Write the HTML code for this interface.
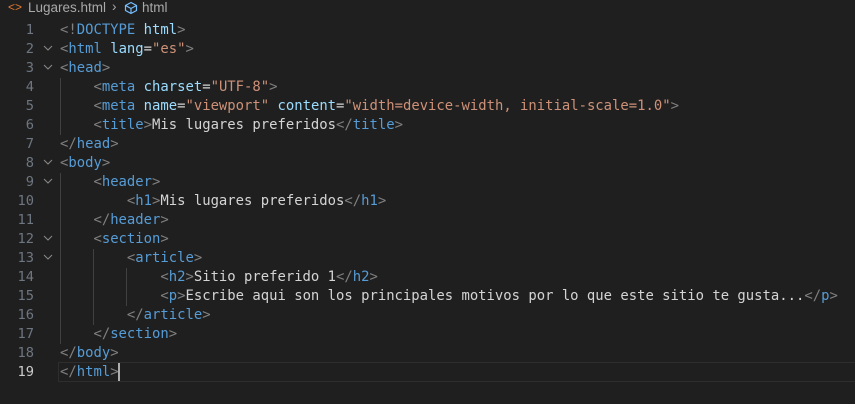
<!DOCTYPE html>
<html><head><meta charset="utf-8"><style>
body{margin:0;width:855px;height:404px;background:#1f1f1f;overflow:hidden;font-family:"DejaVu Sans Mono","Liberation Mono",monospace;position:relative;}
.bc{position:absolute;left:0;top:0;width:300px;height:18px;font:13.5px "Liberation Sans",sans-serif;color:#a9a9a9;}
.ln{position:absolute;left:0;width:34px;text-align:right;font-size:13.7px;line-height:19px;color:#6e7681;}
.code{position:absolute;left:60px;font-size:13.9px;line-height:19px;white-space:pre;color:#d4d4d4;}
.b{color:#808080}.t{color:#569cd6}.a{color:#9cdcfe}.s{color:#ce9178}
.f{position:absolute;left:43px;}
.g{position:absolute;width:1px;background:#404040;}
</style></head><body>
<div class="bc"><span style="position:absolute;left:8px;top:0px;color:#e37933;font-size:12px">&lt;&gt;</span><span style="position:absolute;left:28px;top:0px">Lugares.html</span><span style="position:absolute;left:112px;top:-1px">›</span>
<svg style="position:absolute;left:124px;top:1px" width="14" height="14" viewBox="0 0 14 14" fill="none" stroke="#75beff" stroke-width="1.2"><path d="M7 1.5L12.5 4.5V9.5L7 12.5L1.5 9.5V4.5Z M1.5 4.5L7 7.5L12.5 4.5 M7 7.5V12.5"/></svg>
<span style="position:absolute;left:142px;top:0px">html</span></div>
<div style="position:absolute;left:58px;top:362px;width:797px;height:18px;border:1px solid #2e2e2e;border-right:none"></div>
<div style="position:absolute;left:118px;top:363px;width:2px;height:18px;background:#aeafad"></div>
<div class="g" style="left:60px;top:78px;height:57px"></div>
<div class="g" style="left:60px;top:173px;height:171px"></div>
<div class="g" style="left:93px;top:249px;height:76px"></div>
<div class="g" style="left:126px;top:268px;height:38px"></div>

<div class="ln" style="top:21px">1</div>
<div class="ln" style="top:40px">2</div>
<div class="ln" style="top:59px">3</div>
<div class="ln" style="top:78px">4</div>
<div class="ln" style="top:97px">5</div>
<div class="ln" style="top:116px">6</div>
<div class="ln" style="top:135px">7</div>
<div class="ln" style="top:154px">8</div>
<div class="ln" style="top:173px">9</div>
<div class="ln" style="top:192px">10</div>
<div class="ln" style="top:211px">11</div>
<div class="ln" style="top:230px">12</div>
<div class="ln" style="top:249px">13</div>
<div class="ln" style="top:268px">14</div>
<div class="ln" style="top:287px">15</div>
<div class="ln" style="top:306px">16</div>
<div class="ln" style="top:325px">17</div>
<div class="ln" style="top:344px">18</div>
<div class="ln" style="top:363px;color:#cccccc">19</div>

<svg class="f" style="top:44px" width="10" height="8" viewBox="0 0 10 8"><path d="M1 2L5 6L9 2" fill="none" stroke="#8a8a8a" stroke-width="1"/></svg>
<svg class="f" style="top:63px" width="10" height="8" viewBox="0 0 10 8"><path d="M1 2L5 6L9 2" fill="none" stroke="#8a8a8a" stroke-width="1"/></svg>
<svg class="f" style="top:158px" width="10" height="8" viewBox="0 0 10 8"><path d="M1 2L5 6L9 2" fill="none" stroke="#8a8a8a" stroke-width="1"/></svg>
<svg class="f" style="top:177px" width="10" height="8" viewBox="0 0 10 8"><path d="M1 2L5 6L9 2" fill="none" stroke="#8a8a8a" stroke-width="1"/></svg>
<svg class="f" style="top:234px" width="10" height="8" viewBox="0 0 10 8"><path d="M1 2L5 6L9 2" fill="none" stroke="#8a8a8a" stroke-width="1"/></svg>
<svg class="f" style="top:253px" width="10" height="8" viewBox="0 0 10 8"><path d="M1 2L5 6L9 2" fill="none" stroke="#8a8a8a" stroke-width="1"/></svg>

<div class="code" style="top:21px"><span class="b">&lt;!</span><span class="t">DOCTYPE</span> <span class="a">html</span><span class="b">&gt;</span></div>
<div class="code" style="top:40px"><span class="b">&lt;</span><span class="t">html</span> <span class="a">lang</span>=<span class="s">"es"</span><span class="b">&gt;</span></div>
<div class="code" style="top:59px"><span class="b">&lt;</span><span class="t">head</span><span class="b">&gt;</span></div>
<div class="code" style="top:78px">    <span class="b">&lt;</span><span class="t">meta</span> <span class="a">charset</span>=<span class="s">"UTF-8"</span><span class="b">&gt;</span></div>
<div class="code" style="top:97px">    <span class="b">&lt;</span><span class="t">meta</span> <span class="a">name</span>=<span class="s">"viewport"</span> <span class="a">content</span>=<span class="s">"width=device-width, initial-scale=1.0"</span><span class="b">&gt;</span></div>
<div class="code" style="top:116px">    <span class="b">&lt;</span><span class="t">title</span><span class="b">&gt;</span>Mis lugares preferidos<span class="b">&lt;/</span><span class="t">title</span><span class="b">&gt;</span></div>
<div class="code" style="top:135px"><span class="b">&lt;/</span><span class="t">head</span><span class="b">&gt;</span></div>
<div class="code" style="top:154px"><span class="b">&lt;</span><span class="t">body</span><span class="b">&gt;</span></div>
<div class="code" style="top:173px">    <span class="b">&lt;</span><span class="t">header</span><span class="b">&gt;</span></div>
<div class="code" style="top:192px">        <span class="b">&lt;</span><span class="t">h1</span><span class="b">&gt;</span>Mis lugares preferidos<span class="b">&lt;/</span><span class="t">h1</span><span class="b">&gt;</span></div>
<div class="code" style="top:211px">    <span class="b">&lt;/</span><span class="t">header</span><span class="b">&gt;</span></div>
<div class="code" style="top:230px">    <span class="b">&lt;</span><span class="t">section</span><span class="b">&gt;</span></div>
<div class="code" style="top:249px">        <span class="b">&lt;</span><span class="t">article</span><span class="b">&gt;</span></div>
<div class="code" style="top:268px">            <span class="b">&lt;</span><span class="t">h2</span><span class="b">&gt;</span>Sitio preferido 1<span class="b">&lt;/</span><span class="t">h2</span><span class="b">&gt;</span></div>
<div class="code" style="top:287px">            <span class="b">&lt;</span><span class="t">p</span><span class="b">&gt;</span>Escribe aqui son los principales motivos por lo que este sitio te gusta...<span class="b">&lt;/</span><span class="t">p</span><span class="b">&gt;</span></div>
<div class="code" style="top:306px">        <span class="b">&lt;/</span><span class="t">article</span><span class="b">&gt;</span></div>
<div class="code" style="top:325px">    <span class="b">&lt;/</span><span class="t">section</span><span class="b">&gt;</span></div>
<div class="code" style="top:344px"><span class="b">&lt;/</span><span class="t">body</span><span class="b">&gt;</span></div>
<div class="code" style="top:363px"><span class="b">&lt;/</span><span class="t">html</span><span class="b">&gt;</span></div>
</body></html>
